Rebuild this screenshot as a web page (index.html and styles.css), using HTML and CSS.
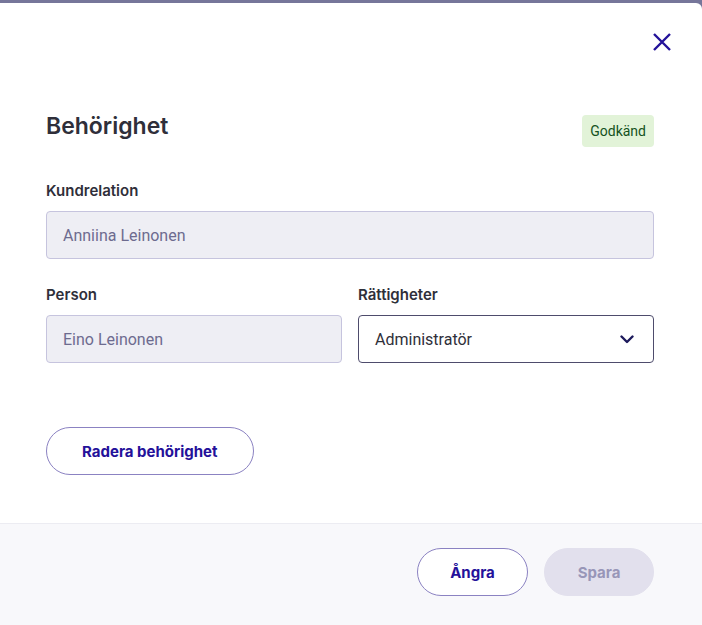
FILE: index.html
```html
<!DOCTYPE html>
<html lang="sv">
<head>
<meta charset="utf-8">
<title>Behörighet</title>
<link rel="stylesheet" href="styles.css">
</head>
<body>
<div class="overlay">
  <div class="modal">
    <div class="modal-top">
      <button class="close" aria-label="Stäng">
        <svg width="20" height="20" viewBox="0 0 20 20"><path d="M2 2 L18 18 M18 2 L2 18" stroke="#23129a" stroke-width="2.4" fill="none"/></svg>
      </button>
    </div>
    <div class="modal-body">
      <div class="title-row">
        <h1 class="title">Behörighet</h1>
        <span class="badge">Godkänd</span>
      </div>
      <div class="field">
        <label class="label">Kundrelation</label>
        <div class="input disabled">Anniina Leinonen</div>
      </div>
      <div class="row">
        <div class="field">
          <label class="label">Person</label>
          <div class="input disabled">Eino Leinonen</div>
        </div>
        <div class="field">
          <label class="label">Rättigheter</label>
          <div class="input select">
            <span>Administratör</span>
            <svg width="14" height="9" viewBox="0 0 14 9"><path d="M1.5 1.5 L7 7 L12.5 1.5" stroke="#1d1a5c" stroke-width="2.4" fill="none" stroke-linecap="round" stroke-linejoin="round"/></svg>
          </div>
        </div>
      </div>
      <div class="actions-left">
        <button class="btn btn-outline">Radera behörighet</button>
      </div>
    </div>
    <div class="modal-footer">
      <button class="btn btn-outline btn-cancel">Ångra</button>
      <button class="btn btn-disabled btn-save">Spara</button>
    </div>
  </div>
</div>
</body>
</html>
```
FILE: styles.css
```css
* { box-sizing: border-box; }
html, body { margin: 0; padding: 0; height: 100%; }
body {
  background: #76769a;
  font-family: Inter, "Noto Sans", sans-serif;
  color: #2f2f3a;
}
.overlay {
  padding-top: 3px;
  height: 100%;
}
.modal {
  background: #ffffff;
  height: 100%;
  border-top-right-radius: 6px;
  display: flex;
  flex-direction: column;
}
.modal-top {
  display: flex;
  justify-content: flex-end;
  padding: 19px 20px 0 0;
}
.close {
  width: 40px;
  height: 40px;
  border: 0;
  background: transparent;
  padding: 0;
  display: flex;
  align-items: center;
  justify-content: center;
  cursor: pointer;
}
.modal-body {
  padding: 49px 48px 48px 46px;
  flex: 1;
}
.title-row {
  display: flex;
  justify-content: space-between;
  align-items: flex-start;
  margin-bottom: 34px;
}
.title {
  margin: 0;
  font-size: 23px;
  line-height: 30px;
  font-weight: 600;
  color: #2f2f3a;
}
.badge {
  margin-top: 4px;
  height: 32px;
  padding: 0 8px;
  display: flex;
  align-items: center;
  background: #e2f3d8;
  color: #14521d;
  border-radius: 4px;
  font-family: Roboto, "Liberation Sans", sans-serif;
  font-size: 14px;
}
.field {
  display: flex;
  flex-direction: column;
  gap: 10px;
}
.label {
  font-size: 15px;
  line-height: 20px;
  font-weight: 600;
  color: #2f2f3a;
}
.input {
  height: 48px;
  border-radius: 4px;
  padding: 0 16px;
  display: flex;
  align-items: center;
  font-family: Roboto, "Liberation Sans", sans-serif;
  font-size: 16px;
}
.input.disabled {
  background: #eeeef4;
  border: 1px solid #c6c4de;
  color: #6d6b8f;
}
.input.select {
  background: #ffffff;
  border: 1px solid #4e4c6c;
  color: #2f2f3a;
  justify-content: space-between;
  padding-right: 19px;
}
.row {
  display: grid;
  grid-template-columns: 1fr 1fr;
  gap: 16px;
  margin-top: 26px;
}
.actions-left {
  margin-top: 64px;
  display: flex;
}
.btn {
  height: 48px;
  border-radius: 24px;
  font-family: Inter, "Noto Sans", sans-serif;
  font-size: 15px;
  font-weight: 700;
  padding: 0 35px;
  cursor: pointer;
}
.btn-outline {
  background: #ffffff;
  border: 1px solid #8b82c2;
  color: #24119a;
}
.btn-disabled {
  background: #e2e0ed;
  border: 1px solid #e2e0ed;
  color: #9896b8;
}
.btn-cancel { width: 111px; padding: 0; }
.btn-save { width: 110px; padding: 0; }
.modal-footer {
  border-top: 1px solid #ececf2;
  background: #f8f8fb;
  display: flex;
  justify-content: flex-end;
  gap: 16px;
  padding: 24px 48px 29px 0;
}
```
